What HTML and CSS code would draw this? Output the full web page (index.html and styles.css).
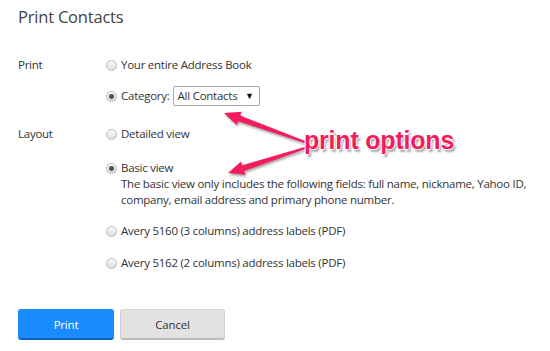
FILE: index.html
```html
<!DOCTYPE html>
<html lang="en">
  <head>
    <meta charset="utf-8">
    <title>Print Contacts</title>
    <link rel="stylesheet" href="styles.css">
  </head>
  <body>
    <div class="dialog">
      <h1>Print Contacts</h1>
      <div class="group printGroup">
        <div class="label">Print</div>
        <div class="options">
          <label class="option"><input type="radio" name="print"> Your entire Address Book</label>
          <label class="option"><input type="radio" name="print" checked> Category:
            <span class="select">All Contacts <span class="caret">&#9660;</span></span>
          </label>
        </div>
      </div>
      <div class="group layoutGroup">
        <div class="label">Layout</div>
        <div class="options">
          <label class="option"><input type="radio" name="layout"> Detailed view</label>
          <div class="basic">
            <label class="option"><input type="radio" name="layout" checked> Basic view</label>
            <p class="note">The basic view only includes the following fields: full name, nickname, Yahoo ID,<br>company, email address and primary phone number.</p>
          </div>
          <label class="option"><input type="radio" name="layout"> Avery 5160 (3 columns) address labels (PDF)</label>
          <label class="option"><input type="radio" name="layout"> Avery 5162 (2 columns) address labels (PDF)</label>
        </div>
      </div>
      <div class="buttons">
        <button class="btn primary" type="button">Print</button>
        <button class="btn" type="button">Cancel</button>
      </div>
    </div>

    <!-- annotation drawn over the dialog -->
    <div class="annotation">
      <svg class="arrows" width="550" height="351" viewBox="0 0 550 351">
        <polygon points="224,113 241.5,111.8 240.1,115.6 305.3,141.1 304.7,142.9 238.1,121.2 236.7,125" />
        <polygon points="228,173 241,161.4 242.3,165.2 304.7,147 305.3,149 244.1,171 245.4,174.8" />
      </svg>
      <span class="callout">print options</span>
    </div>
  </body>
</html>
```

FILE: styles.css
```css
body {
  margin: 0;
  background-color: #fff;
  font-family: 'Open Sans', sans-serif;
  font-size: 11.5px;
  letter-spacing: -0.25px;
  color: #333;
}
.dialog {
  padding: 0 18px;
}
h1 {
  margin: 0;
  padding-top: 6px;
  font-size: 16.5px;
  font-weight: normal;
  line-height: 22px;
  letter-spacing: -0.2px;
  color: #444;
}
.group {
  display: flex;
  flex-direction: row;
}
.printGroup {
  margin-top: 29px;
}
.layoutGroup {
  margin-top: 20px;
}
.label {
  flex-shrink: 0;
  width: 88px;
  line-height: 16px;
}
.options {
  display: flex;
  flex-direction: column;
  gap: 16px;
}
.printGroup .options {
  gap: 13px;
}
.option {
  display: flex;
  align-items: center;
  gap: 4px;
  line-height: 16px;
  white-space: nowrap;
}
.basic {
  margin-top: 2px;
  margin-bottom: -1px;
}
.note {
  margin: 0 0 0 15px;
  line-height: 16px;
  white-space: nowrap;
}
input[type="radio"] {
  appearance: none;
  flex-shrink: 0;
  margin: 0;
  width: 11px;
  height: 11px;
  border: 1px solid #b9b9b9;
  border-radius: 50%;
  background: linear-gradient(#fafafa, #dedede);
  box-sizing: border-box;
}
input[type="radio"]:checked {
  background: radial-gradient(circle, #555 0 2px, #8a8a8a 2.5px, transparent 3px), linear-gradient(#fafafa, #dedede);
}
.select {
  display: inline-flex;
  align-items: center;
  justify-content: space-between;
  width: 87px;
  height: 20px;
  box-sizing: border-box;
  margin-left: -1px;
  padding: 0 5px 0 4px;
  border: 1px solid #a9a9a9;
  border-radius: 2px;
}
.caret {
  font-size: 9px;
  color: #111;
}
.buttons {
  display: flex;
  gap: 6px;
  margin-top: 38px;
}
.btn {
  height: 31px;
  width: 105px;
  border: 1px solid #d2d2d2;
  border-bottom: 2px solid #bdbdbd;
  border-radius: 3px;
  background-color: #e2e2e2;
  font-family: 'Open Sans', sans-serif;
  font-size: 11.5px;
  letter-spacing: -0.2px;
  color: #333;
}
.primary {
  width: 96px;
  background-color: #1a8cff;
  border-color: #1a8cff;
  border-bottom-color: #0b63c0;
  color: #fff;
}
.annotation {
  position: absolute;
  top: 0;
  left: 0;
  width: 550px;
  height: 351px;
  pointer-events: none;
}
.arrows {
  position: absolute;
  top: 0;
  left: 0;
  filter: drop-shadow(1px 2px 1px rgba(0, 0, 0, 0.35));
}
.arrows polygon {
  fill: #f51c5e;
}
.callout {
  position: absolute;
  left: 304px;
  top: 126px;
  font-family: 'Liberation Sans', Arial, sans-serif;
  font-weight: bold;
  font-size: 25px;
  letter-spacing: -0.2px;
  color: #f51c5e;
  text-shadow: -1px 0 #fff, 1px 0 #fff, 0 -1px #fff, 0 1px #fff, 2px 3px 2px rgba(0, 0, 0, 0.35);
}
```
